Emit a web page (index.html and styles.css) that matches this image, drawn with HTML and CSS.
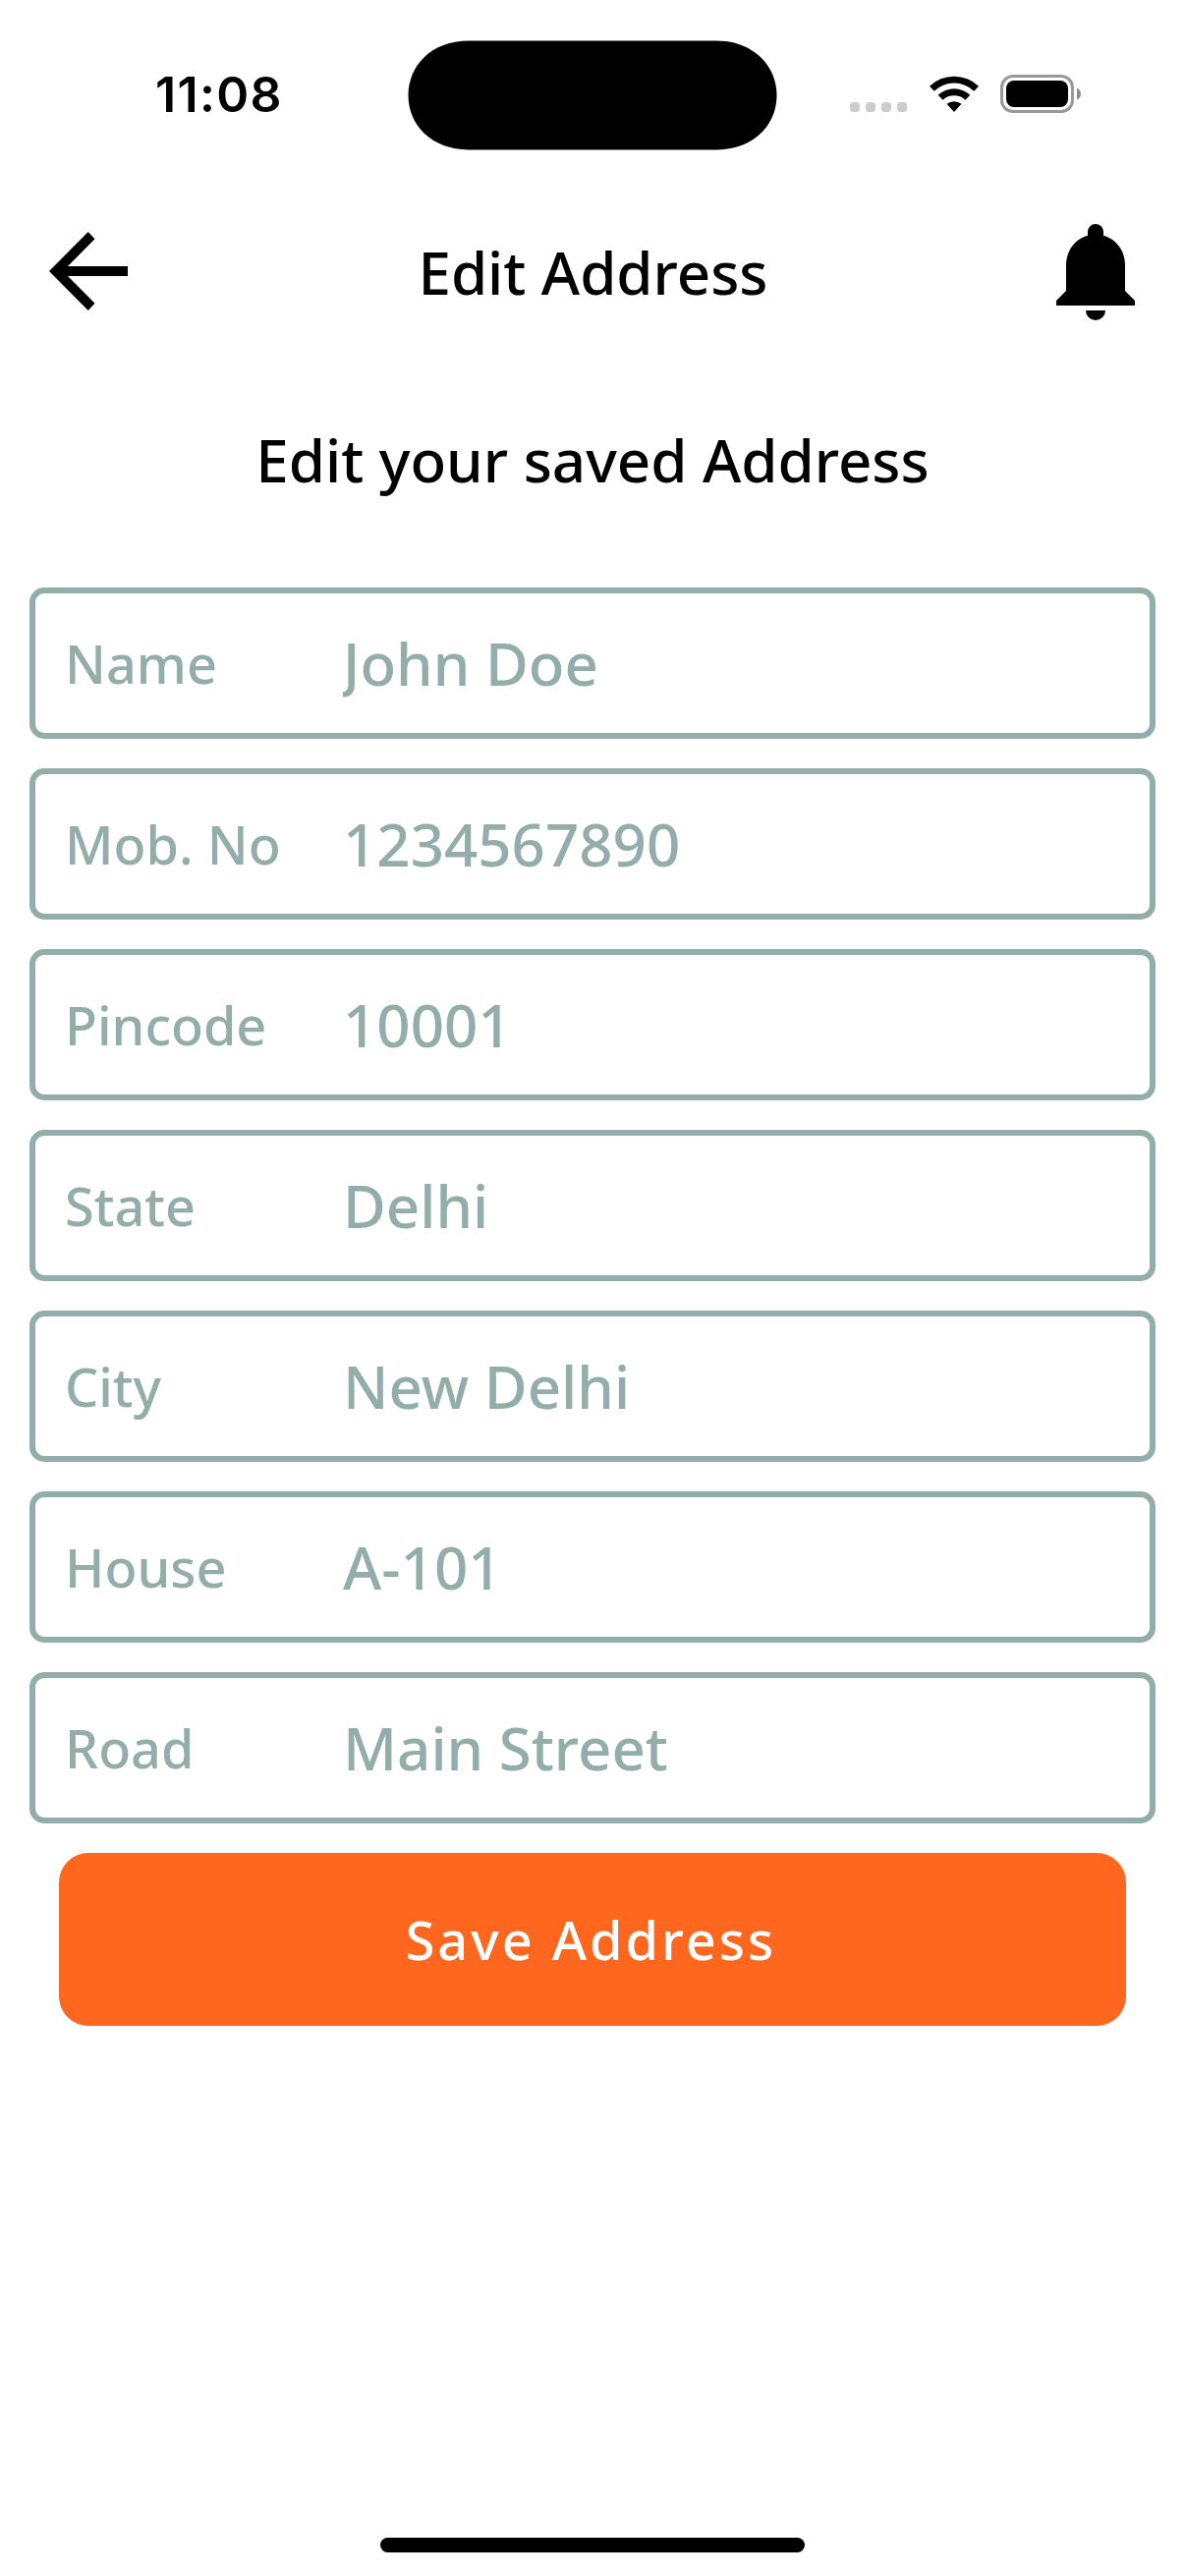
FILE: index.html
```html
<!DOCTYPE html>
<html lang="en">
<head>
<meta charset="utf-8">
<title>Edit Address</title>
<link rel="stylesheet" href="styles.css">
</head>
<body>
<div class="screen">
  <div class="status-bar">
    <div class="time">11:08</div>
    <svg class="island" viewBox="0 0 376 112"><path d="M62 .6H314C352 .6 375.500 26 375.500 56S352 111.400 314 111.400H62C24 111.400 .5 86 .5 56S24 .6 62 .6Z"/></svg>
    <div class="indicators">
      <div class="dots"><i></i><i></i><i></i><i></i></div>
      <svg class="wifi" viewBox="0 0 50 37"><path d="M0 10.700A36.500 36.500 0 0 1 50 10.700L45.300 15.700A29.500 29.500 0 0 0 4.700 15.700ZM8.700 19.700A24 24 0 0 1 41.300 19.700L36.500 24.700A17 17 0 0 0 13.500 24.700ZM17.500 28.800A12 12 0 0 1 32.500 28.800L25 37Z"/></svg>
      <svg class="battery" viewBox="0 0 82 39"><rect x="1.500" y="1.500" width="72" height="36" rx="11.500" fill="none" stroke="#999" stroke-width="3"/><rect x="6" y="6" width="63" height="27" rx="8"/><path d="M78 13.500V25.500Q82 23.500 82 19.500T78 13.500Z" fill="#8c8c8c"/></svg>
    </div>
  </div>
  <header class="header">
    <svg class="back" viewBox="0 0 80 80"><path d="M80 35H19L46.500 7.300L39.700 0L0 40L39.700 80L46.500 72.700L19 45H80Z"/></svg>
    <h1 class="title">Edit Address</h1>
    <svg class="bell" viewBox="0 0 80 98"><path d="M32 11.800V8A8 8 0 0 1 48 8V11.800C61 15.500 70 27 70 42V68L80 78V83H0V78L10 68V42C10 27 19 15.500 32 11.800ZM30 88H50A10 10 0 0 1 30 88Z"/></svg>
  </header>
  <h2 class="subtitle">Edit your saved Address</h2>
  <main class="form">
    <div class="field"><span class="label">Name</span><span class="value">John Doe</span></div>
    <div class="field"><span class="label">Mob. No</span><span class="value">1234567890</span></div>
    <div class="field"><span class="label">Pincode</span><span class="value">10001</span></div>
    <div class="field"><span class="label">State</span><span class="value">Delhi</span></div>
    <div class="field"><span class="label">City</span><span class="value">New Delhi</span></div>
    <div class="field"><span class="label">House</span><span class="value">A-101</span></div>
    <div class="field"><span class="label">Road</span><span class="value">Main Street</span></div>
    <button class="save">Save Address</button>
  </main>
  <div class="home-indicator"></div>
</div>
</body>
</html>
```
FILE: styles.css
```css
* {
  box-sizing: border-box;
}

body {
  margin: 0;
  background: #fff;
  color: #000;
  font-family: "Noto Sans", sans-serif;
  font-weight: 500;
}

.screen {
  display: flex;
  flex-direction: column;
  width: 1206px;
  height: 2622px;
  padding-bottom: 24px;
}

svg {
  display: block;
}

.status-bar {
  display: grid;
  grid-template-columns: 415px 376px 1fr;
  height: 186px;
  padding-top: 41px;
}

.time {
  padding-left: 158px;
  font: 600 50px/110px Inter, sans-serif;
  letter-spacing: 1.300px;
}

.island {
  width: 376px;
  height: 112px;
}

.indicators {
  display: flex;
  align-items: flex-start;
  padding: 35px 0 0 74px;
}

.dots {
  display: flex;
  gap: 6px;
  padding-top: 28px;
}

.dots i {
  width: 10px;
  height: 10px;
  border-radius: 3.500px;
  background: #ccc;
}

.wifi {
  width: 50px;
  height: 37px;
  margin: 1px 22.500px 0 22.500px;
}

.battery {
  width: 82px;
  height: 39px;
}

.header {
  display: flex;
  align-items: center;
  justify-content: space-between;
  height: 182px;
  padding: 0 51px 0 50px;
}

.back {
  width: 80px;
  height: 80px;
  margin-bottom: 2px;
}

.title,
.subtitle {
  margin: 0;
  font-size: 60px;
  font-weight: 500;
  line-height: 82px;
  text-align: center;
}

.title {
  padding-left: 2px;
}

.bell {
  width: 80px;
  height: 98px;
}

.subtitle {
  margin-top: 59px;
}

.form {
  display: flex;
  flex-direction: column;
  gap: 30px;
  padding: 89px 30px 0;
}

.field {
  display: flex;
  align-items: center;
  height: 154px;
  padding-left: 30px;
  border: 6px solid #93aeaa;
  border-radius: 15px;
  color: #93aeaa;
}

.label {
  width: 283px;
  font-size: 54px;
}

.value {
  flex: 1;
  overflow: hidden;
  font-size: 60px;
}

.save {
  height: 176px;
  margin: 0 30px;
  padding: 0 3px 0 0;
  border: 0;
  border-radius: 30px;
  background: #ff671f;
  color: #fff;
  font: inherit;
  font-size: 54px;
  letter-spacing: 3px;
}

.home-indicator {
  width: 432px;
  height: 15px;
  margin: auto auto 0;
  border-radius: 8px;
  background: #000;
}
```
